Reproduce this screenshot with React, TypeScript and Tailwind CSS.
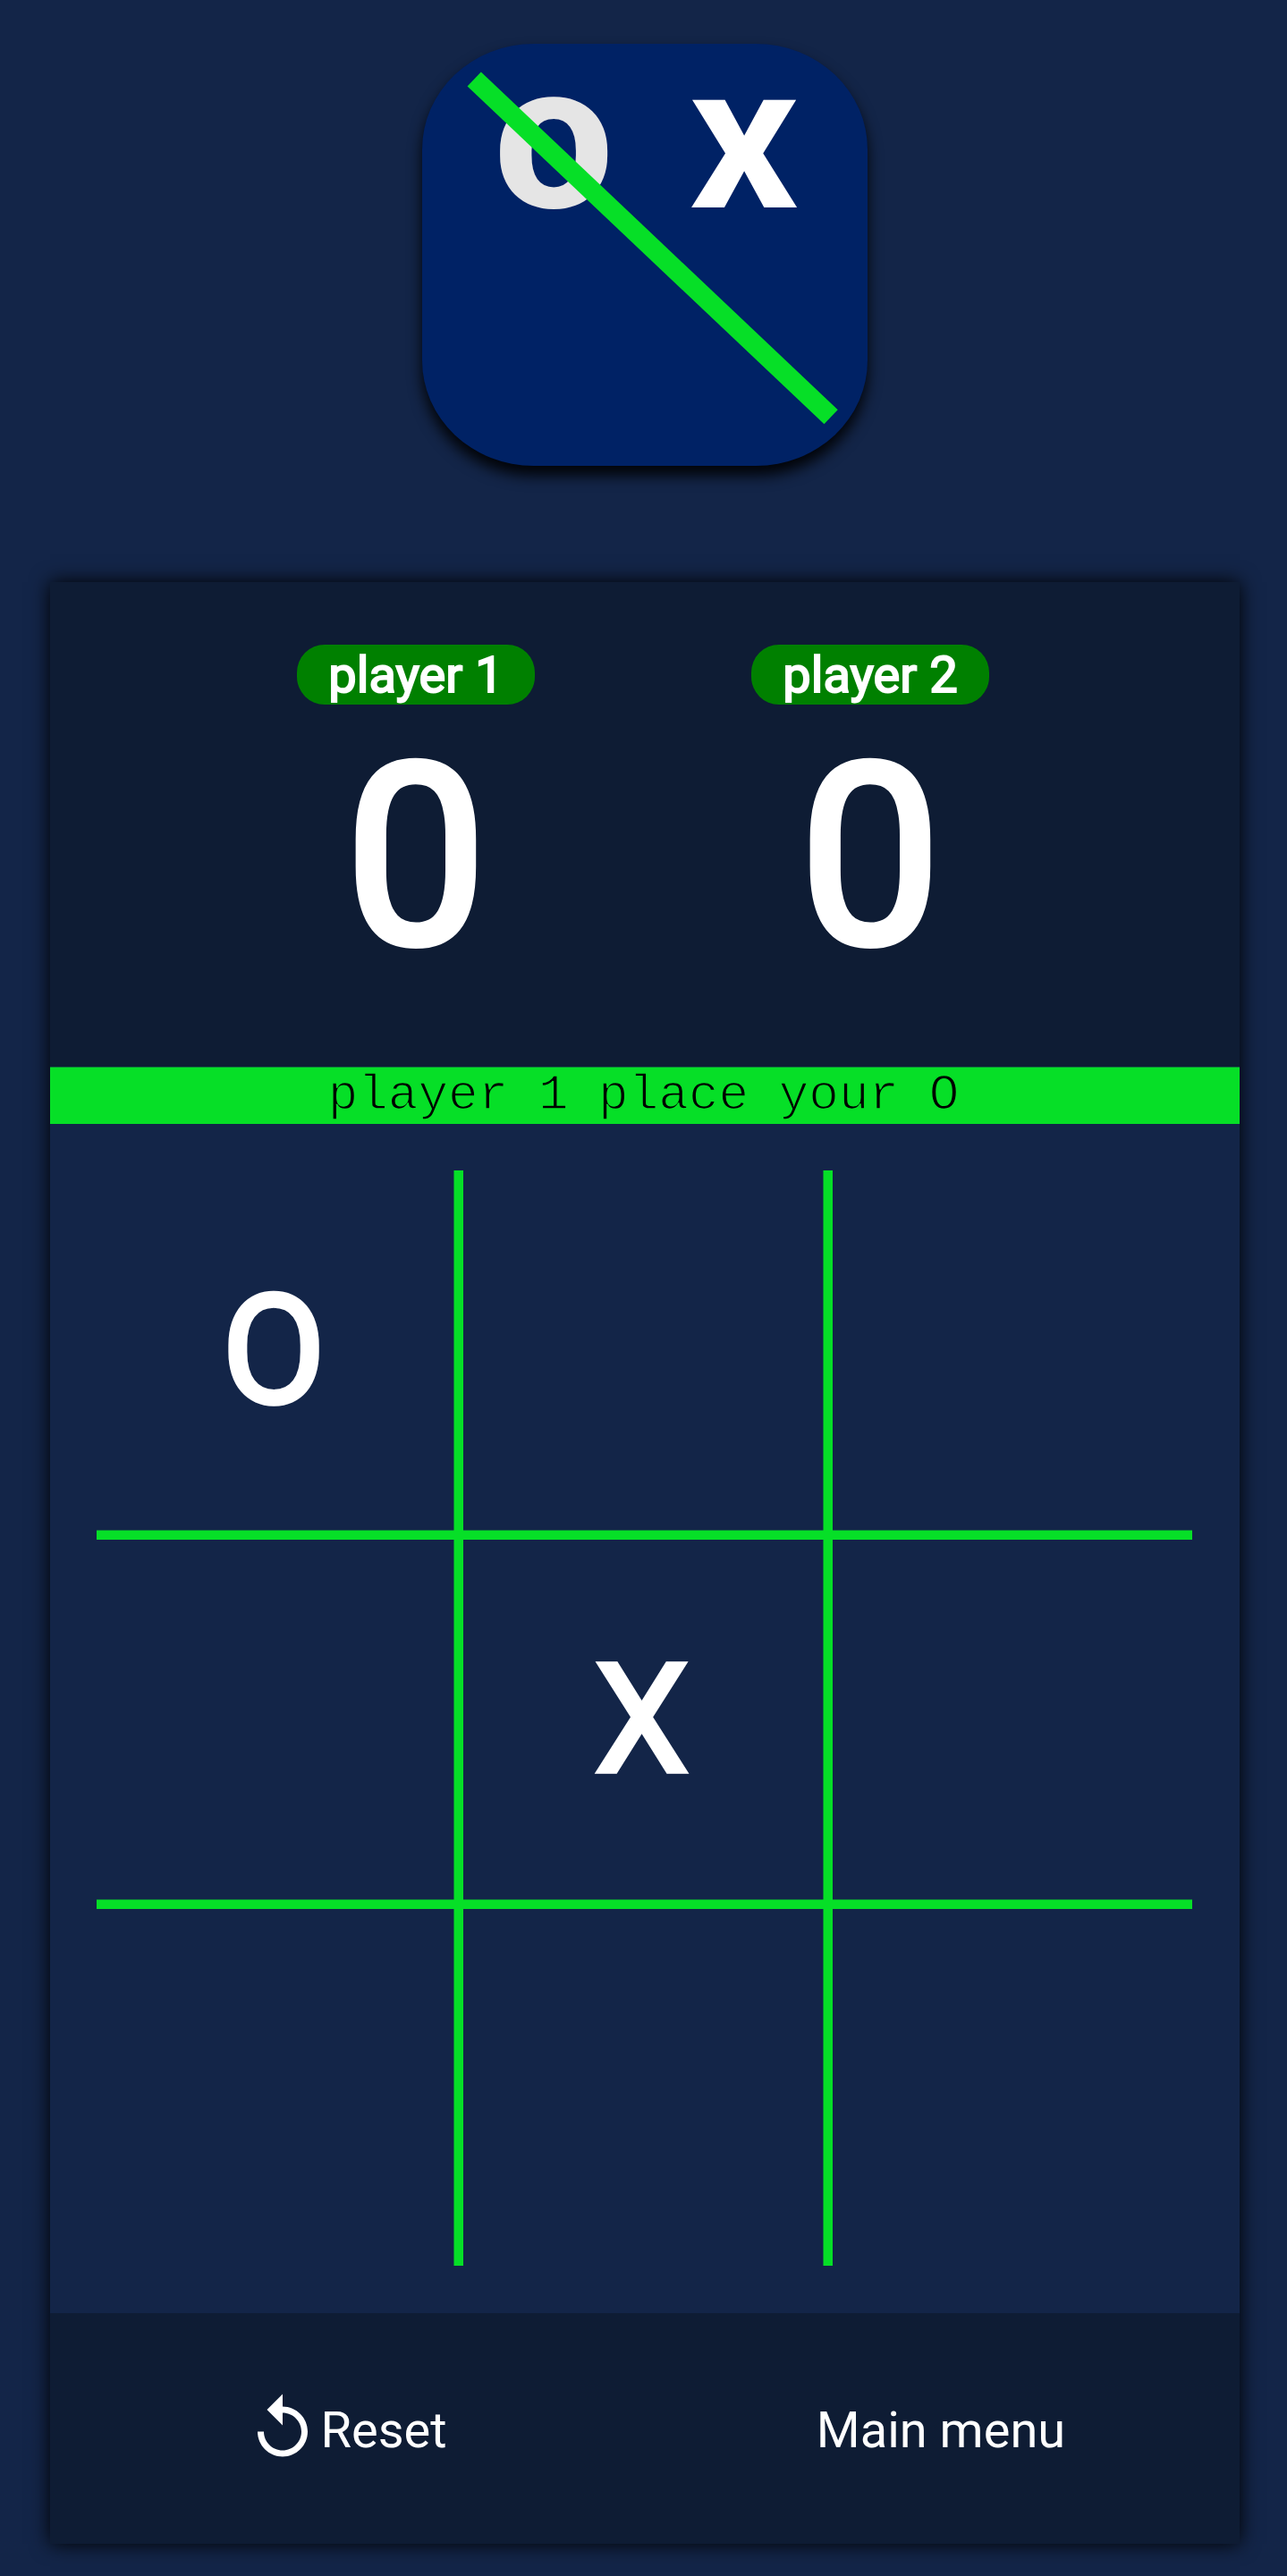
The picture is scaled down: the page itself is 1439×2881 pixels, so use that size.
import { MdReplay } from "react-icons/md";

function Logo() {
  return (
    <div className="h-[472px] w-[498px] rounded-[25%] bg-[#002265] shadow-[0_10.5px_16px_rgba(0,0,0,0.9)]">
      <svg viewBox="0 0 498 472" className="block h-full w-full" aria-label="OX logo">
        <text
          transform="translate(147.3 182.3) scale(1.125 1)"
          textAnchor="middle"
          className="fill-[#e5e5e5] stroke-[#e5e5e5] stroke-2 font-['Roboto'] text-[168.5px] font-black"
        >
          O
        </text>
        <text
          transform="translate(360 182.5) scale(1.1 1)"
          textAnchor="middle"
          className="fill-white font-['Roboto'] text-[169px] font-black"
        >
          X
        </text>
        <line x1="58.2" y1="39.5" x2="457.1" y2="417.3" stroke="#06df27" strokeWidth="22.2" />
      </svg>
    </div>
  );
}

function Player({ name, score }: { name: string; score: number }) {
  return (
    <div className="flex w-[266px] flex-col items-center">
      <div className="flex h-[67px] w-full items-center justify-center rounded-[31px] bg-[#008000] pt-px text-[56px] leading-[66px] [-webkit-text-stroke:2px_white]">
        {name}
      </div>
      <div className="mt-[6px] text-[280px] leading-[328px] [-webkit-text-stroke:8.75px_white]">{score}</div>
    </div>
  );
}

const board = ["O", "", "", "", "X", "", "", "", ""];
const rows = ["row-start-1", "row-start-3", "row-start-5"];
const columns = ["col-start-1", "col-start-3", "col-start-5"];

function Board() {
  return (
    <div className="grid h-[1330px] grid-cols-[399px_11px_402px_11px_402px] grid-rows-[402px_11px_402px_11px_399px] bg-[#132548] pt-[52px] pl-[52px]">
      {board.map((mark, i) => (
        <button
          key={i}
          className={`${rows[Math.floor(i / 3)]} ${columns[i % 3]} flex items-center justify-center pt-[2px] pr-[3px] text-[168px] leading-[196px] [-webkit-text-stroke:5.25px_white]`}
        >
          {mark}
        </button>
      ))}
      <div className="col-start-2 row-span-5 row-start-1 border-l border-[#06df27]/50 bg-[#06df27] bg-clip-padding" />
      <div className="col-start-4 row-span-5 row-start-1 border-l border-[#06df27]/50 bg-[#06df27] bg-clip-padding" />
      <div className="col-span-5 col-start-1 row-start-2 border-t border-[#06df27]/50 bg-[#06df27] bg-clip-padding" />
      <div className="col-span-5 col-start-1 row-start-4 border-t border-[#06df27]/50 bg-[#06df27] bg-clip-padding" />
    </div>
  );
}

export default function App() {
  return (
    <div className="flex h-[2881px] w-full flex-col items-center bg-[#132548] pt-[49px] pl-[3px] font-['Roboto',sans-serif] text-white">
      <Logo />
      <main className="mt-[130px] flex w-[1330px] flex-col shadow-[0_0_21px_#000]">
        <header className="flex h-[542px] items-start justify-center gap-[242px] bg-[#0e1c34] pt-[70px] pr-[4px]">
          <Player name="player 1" score={0} />
          <Player name="player 2" score={0} />
        </header>
        <div className="box-content flex h-[63px] items-center justify-center border-t border-[#06df27]/50 bg-[#06df27] bg-clip-padding font-['Liberation_Mono',monospace] text-[56px] leading-[63px] whitespace-pre text-black [-webkit-text-stroke:1.6px_#06df27]">
          <span className="pr-[3px]">player 1 place your O</span>
        </div>
        <Board />
        <footer className="grid h-[258px] grid-cols-2 items-center bg-[#0e1c34] text-[56px] leading-[66px]">
          <button className="flex items-center justify-center pr-[3px]">
            <MdReplay className="h-[84px] w-[84px]" />
            <span className="pt-[4px]">Reset</span>
          </button>
          <button className="pt-[4px] pr-[3px]">Main menu</button>
        </footer>
      </main>
    </div>
  );
}
